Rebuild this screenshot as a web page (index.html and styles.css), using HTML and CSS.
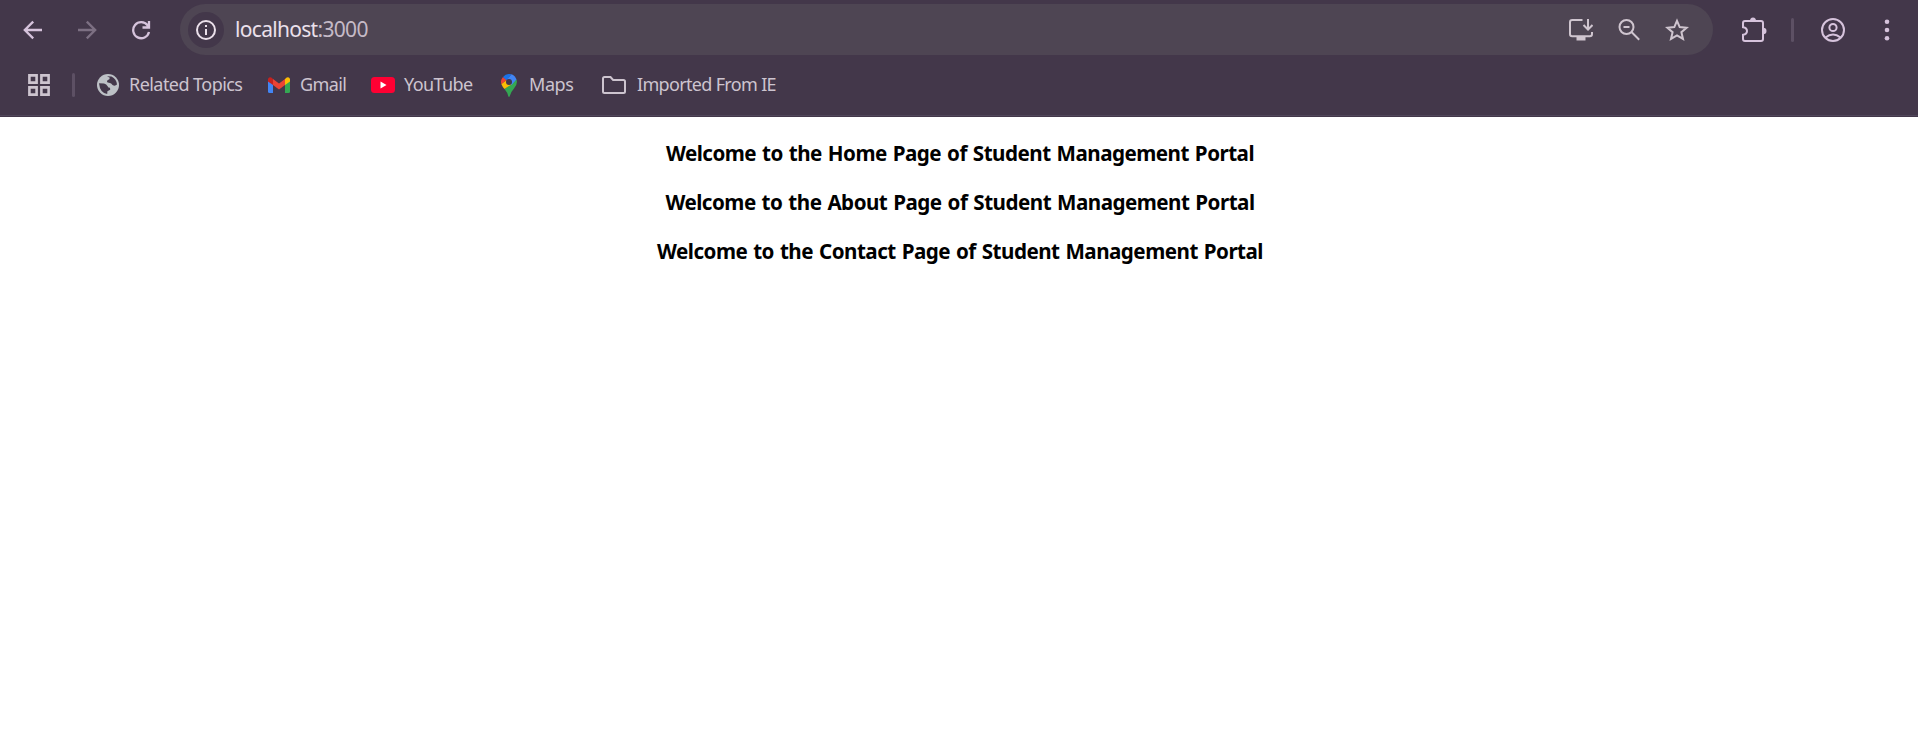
FILE: index.html
```html
<!DOCTYPE html>
<html lang="en">
<head>
<meta charset="utf-8">
<title>Student Management Portal</title>
<link rel="stylesheet" href="styles.css">
</head>
<body>
<header class="chrome">
  <div class="toolbar">
    <svg class="nav-icon back" viewBox="0 0 20 20"><path d="M19 10H3M10.2 1.6 1.8 10l8.4 8.4"/></svg>
    <svg class="nav-icon forward" viewBox="0 0 20 20"><path d="M1 10h16M9.8 1.6l8.4 8.4-8.4 8.4"/></svg>
    <svg class="nav-icon reload" viewBox="0 0 20 20"><path d="M18 12A8 8 0 1 1 16.6 5.4M18 1v6.500h-6.500M16 4.500l1 2"/></svg>
    <div class="omnibox">
      <span class="site-info"><svg class="icon20" viewBox="0 0 20 20"><circle cx="10" cy="10" r="9"/><path d="M10 9v6M10 5v2"/></svg></span>
      <span class="url">localhost<span class="port">:3000</span></span>
      <div class="actions">
        <svg class="icon24" viewBox="0 0 24 24"><path d="M13.500 2H3.200Q1 2 1 4.200V16q0 2.200 2.200 2.200h17.600Q23 18.200 23 16v-2M19 1v10M14.500 7l4.500 4.500L23.500 7"/><path class="solid" d="M7.500 18h9v4.500h-9z"/></svg>
        <svg class="icon24" viewBox="0 0 24 24"><circle cx="9.500" cy="9" r="7"/><path d="M14.500 14l7.700 7.700M6.500 9h6"/></svg>
        <svg class="icon24" viewBox="0 0 24 24"><path d="M12 2.800l2.700 6.300 6.900.6-5.200 4.500 1.600 6.700-6-3.600-6 3.600 1.600-6.700-5.200-4.500 6.900-.6z"/></svg>
      </div>
    </div>
    <svg class="icon26 extensions" viewBox="0 0 26 26"><path d="M4 4h16q2 0 2 2v16q0 2-2 2H4q-2 0-2-2v-4.200q4-.6 4-3.800T2 10.200V6q0-2 2-2z"/><path class="solid" d="M9 4a3 3.500 0 0 1 6 0zM22 10.800a3.500 3.200 0 0 1 0 6.400z"/></svg>
    <span class="divider toolbar-divider"></span>
    <svg class="icon24 profile" viewBox="0 0 24 24"><circle cx="12" cy="12" r="11"/><circle cx="12" cy="9.500" r="3.600"/><path d="M4.500 19.500q7.500-6 15 0"/></svg>
    <svg class="menu" viewBox="0 0 6 24"><circle cx="3" cy="3.700" r="2.300"/><circle cx="3" cy="12" r="2.300"/><circle cx="3" cy="20.300" r="2.300"/></svg>
  </div>
  <nav class="bookmarks">
    <svg class="apps" viewBox="0 0 22 22"><path d="M1.400 1.400h7.200v7.200H1.400zM13.400 1.400h7.200v7.200h-7.200zM1.400 13.400h7.200v7.200H1.400zM13.400 13.400h7.200v7.200h-7.200z"/></svg>
    <span class="divider bookmark-divider"></span>
    <a class="bookmark related"><svg class="globe" viewBox="0 0 22 22"><circle cx="11" cy="11" r="11"/><path d="M10 2.200l4.500.3q5 2.500 5.500 8-2 2-4.500.5Q14.500 9 12 8.800q-3-.3-1.500-2.600 2.500-.4 2.300-2.400zM2 9.200l5 .2q2.500.6 3.800 3 .3 1.500 2.200 1.400l.2 2-2.800 1.400-.2 2.700Q3 19 2 9.200z"/></svg><span>Related Topics</span></a>
    <a class="bookmark gmail"><svg viewBox="0 0 22 16"><path fill="#4285f4" d="M0 3l5 3.500V16H1.500Q0 16 0 14.500z"/><path fill="#34a853" d="M22 3l-5 3.500V16h3.500q1.500 0 1.500-1.500z"/><path fill="#fbbc04" d="M17 2l1.700-1.400Q21-.8 22 2v2.500L17 8z"/><path fill="#ea4335" d="M5 2l6 4.500L17 2v6l-6 4.500L5 8z"/><path fill="#c5221f" d="M5 2L3.300.6Q1-.8 0 2v2.500L5 8z"/></svg><span>Gmail</span></a>
    <a class="bookmark youtube"><svg viewBox="0 0 24 16"><rect width="24" height="16" rx="3.500" fill="#ff0033"/><path fill="#fff" d="M9.500 4.500v7l6-3.500z"/></svg><span>YouTube</span></a>
    <a class="bookmark maps"><svg viewBox="0 0 16 23"><path fill="#34a853" d="M15.500 5.500Q17 10 13 14.500 9.800 18 8.800 22q-.8 2-1.600 0Q6.500 18.500 3.500 15z"/><path fill="#fbbc04" d="M5.500 6L.3 10q.9 2.500 3.200 5L11 10z"/><path fill="#ea4335" d="M2 3q-3 3.500-1.700 7L6 6z"/><path fill="#1a73e8" d="M2 3q3.500-4 8.500-2.700L5.700 6.500z"/><path fill="#4285f4" d="M10.500.3q3.500 1.200 5 5.200L10.500 11 5.700 6z"/><circle cx="8" cy="8" r="3" fill="#43374a"/></svg><span>Maps</span></a>
    <a class="bookmark imported"><svg class="folder" viewBox="0 0 24 18"><path d="M2.500 1h6l2.600 3h10.400Q23 4 23 5.500v10q0 1.500-1.500 1.500h-19Q1 17 1 15.500v-13Q1 1 2.500 1z"/></svg><span>Imported From IE</span></a>
  </nav>
</header>
<main class="page">
  <h1 class="home">Welcome to the Home Page of Student Management Portal</h1>
  <h1 class="about">Welcome to the About Page of Student Management Portal</h1>
  <h1 class="contact">Welcome to the Contact Page of Student Management Portal</h1>
</main>
</body>
</html>
```
FILE: styles.css
```css
* { box-sizing: border-box; }
body { margin: 0; background: #fff; color: #000; font-family: "Noto Sans", "Open Sans", sans-serif; }
svg { display: block; flex: none; fill: none; stroke: currentColor; stroke-width: 2; }
.solid { fill: currentColor; stroke: none; }
.chrome { height: 117px; background: #43374a; color: #d6c3dc; }
.toolbar { display: flex; align-items: center; height: 60px; padding-left: 23px; }
.nav-icon { width: 20px; height: 20px; margin-right: 34px; stroke-width: 2.300; }
.forward { color: #7d7083; }
.reload { margin-right: 29px; }
.omnibox { display: flex; align-items: center; width: 1533px; height: 51px; margin-bottom: 1px; border-radius: 26px; background: #4e4553; padding: 1px 24px 0 8px; color: #cfc5cf; }
.site-info { display: flex; align-items: center; justify-content: center; width: 36px; height: 36px; border-radius: 50%; background: #43374a; color: #ebe0eb; }
.icon20 { width: 20px; height: 20px; }
.icon24 { width: 24px; height: 24px; }
.icon26 { width: 26px; height: 26px; }
.url { margin-left: 11px; padding-bottom: 2px; font-size: 21px; line-height: 28px; letter-spacing: -0.690px; color: #ebe0eb; white-space: nowrap; }
.port { color: #c5bac7; }
.actions { display: flex; gap: 24px; margin-left: auto; }
.extensions { margin-left: 28px; }
.divider { flex: none; width: 3px; height: 24px; border-radius: 2px; background: #5d5064; }
.toolbar-divider { margin-left: 24px; }
.profile { margin-left: 27px; }
.menu { width: 6px; height: 24px; margin-left: 39px; fill: currentColor; stroke: none; }
.bookmarks { display: flex; align-items: center; height: 56px; padding: 0 0 5px 28px; border-bottom: 1px solid #50465a; color: #cdc4cf; font-size: 18px; line-height: 24px; letter-spacing: -0.600px; white-space: nowrap; }
.apps { width: 22px; height: 22px; stroke-width: 2.600; }
.bookmark-divider { margin-left: 22px; }
.bookmark { display: flex; align-items: center; flex: none; }
.bookmark span { padding-bottom: 2px; }
.bookmark svg { stroke: none; }
.related { width: 171px; margin-left: 22px; gap: 10px; letter-spacing: -0.550px; }
.globe { width: 22px; height: 22px; fill: #bdc1c6; }
.globe path { fill: #43374a; }
.gmail { width: 103px; gap: 10px; }
.gmail svg { width: 22px; height: 16px; }
.youtube { width: 130px; gap: 9px; }
.youtube svg { width: 24px; height: 16px; }
.maps { width: 101px; gap: 12px; letter-spacing: -0.450px; }
.maps svg { width: 16px; height: 23px; }
.imported { gap: 11px; letter-spacing: -0.670px; }
.bookmark .folder { width: 24px; height: 18px; stroke: currentColor; }
.page { padding: 21px 0 0 2px; text-align: center; }
.page h1 { margin: 0 0 19px; font-size: 20.600px; line-height: 30px; font-weight: 700; letter-spacing: -0.510px; word-spacing: 1.100px; }
```
